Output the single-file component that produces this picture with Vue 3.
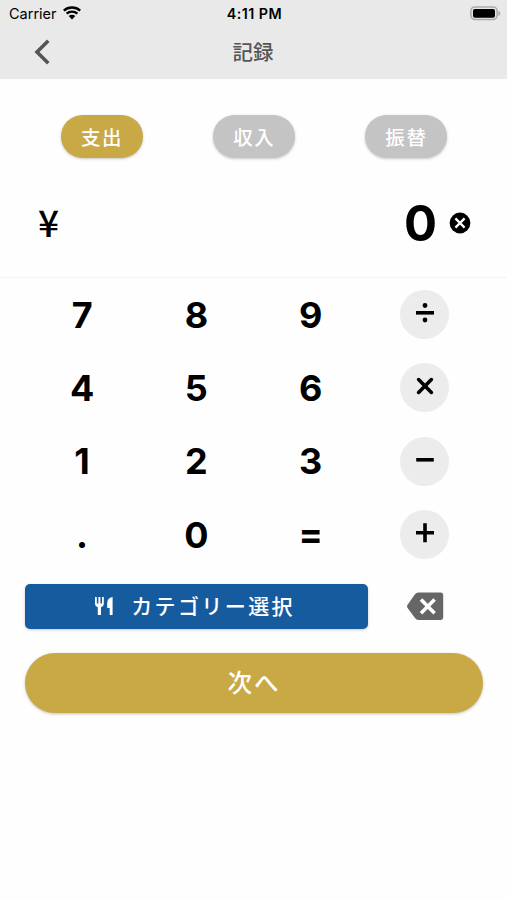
<script setup>
const tabs = [
  { label: '支出', active: true },
  { label: '収入', active: false },
  { label: '振替', active: false },
]
const keys = [
  '7', '8', '9', 'divide',
  '4', '5', '6', 'times',
  '1', '2', '3', 'minus',
  '.', '0', '=', 'plus',
]
const operators = {
  divide: 'M3 11.8H21',
  times: 'M5.6 5.6L18.4 18.4M18.4 5.6L5.6 18.4',
  minus: 'M3.2 11.8H20.8',
  plus: 'M3 11.8H21M12 2.3V21.3',
}
</script>

<template>
  <div class="screen">
    <header class="header">
      <div class="status">
        <div class="carrier">
          <span>Carrier</span>
          <svg class="wifi" width="18" height="14" viewBox="0 0 18 14">
            <path d="M.8 4.6C5.2.4 12.8.4 17.2 4.6" />
            <path d="M3.6 7.6C6.6 4.9 11.4 4.9 14.4 7.6" />
            <path class="dot" d="M5.7 10.1C7.6 8.3 10.4 8.3 12.3 10.1L9 13.5Z" />
          </svg>
        </div>
        <span class="time">4:11 PM</span>
        <svg class="battery" width="31" height="15" viewBox="0 0 31 15">
          <rect x=".9" y=".9" width="26.2" height="12.7" rx="4" />
          <rect class="charge" x="3" y="3" width="22" height="8.7" rx="1.8" />
          <path d="M28.4 4.7C30.9 5.6 30.9 9 28.4 9.9Z" />
        </svg>
      </div>
      <nav class="nav">
        <svg class="back" width="18" height="28" viewBox="0 0 18 28">
          <path d="M15.3 2.8L4 14L15.3 25.2" />
        </svg>
        <h1>記録</h1>
      </nav>
    </header>

    <div class="tabs">
      <div v-for="t in tabs" :key="t.label" class="tab-cell">
        <button class="tab" :class="{ active: t.active }"><span>{{ t.label }}</span></button>
      </div>
    </div>

    <div class="amount">
      <span class="yen">¥</span>
      <div class="value">
        <span class="number">0</span>
        <svg width="22" height="22" viewBox="0 0 22 22">
          <circle cx="11" cy="11" r="10.4" />
          <path d="M6.4 6.4L15.6 15.6M15.6 6.4L6.4 15.6" />
        </svg>
      </div>
    </div>

    <div class="keypad">
      <div v-for="k in keys" :key="k" class="key">
        <button v-if="operators[k]" class="operator">
          <svg width="24" height="24" viewBox="0 0 24 24" :class="k">
            <path :d="operators[k]" />
            <template v-if="k === 'divide'">
              <circle cx="12" cy="4.5" r="2.4" />
              <circle cx="12" cy="19" r="2.4" />
            </template>
          </svg>
        </button>
        <span v-else :class="{ equals: k === '=' }">{{ k }}</span>
      </div>
    </div>

    <div class="category-row">
      <button class="category">
        <svg width="18" height="20" viewBox="0 0 18 20">
          <path d="M0 1H1.8V7.5H3.4V1H5.4V7.5H7V1H8.8V8Q8.8 10.4 6 11.3V19H2.8V11.3Q0 10.4 0 8Z" />
          <path d="M17.6 1V19H14.7V12H12.2V7Q12.2 2 17.6 1Z" />
        </svg>
        <span>カテゴリー選択</span>
      </button>
      <div class="delete-cell">
        <svg width="38" height="29" viewBox="0 0 38 29">
          <path class="body" d="M1.4 13L8.8 2.6Q10.3.6 12.5.6H34.5Q37.2.6 37.2 3.3V25Q37.2 28 34.5 28H12.5Q10.3 28 8.8 25.8L1.4 15.7Q.6 14.3 1.4 13Z" />
          <path class="cross" d="M15 7.6L28.6 21.2M28.6 7.6L15 21.2" />
        </svg>
      </div>
    </div>

    <button class="next"><span>次へ</span></button>
  </div>
</template>

<style>
body {
  margin: 0;
  background: #fefefe;
}
</style>

<style scoped>
.screen {
  height: 900px;
  background: #fefefe;
  color: #000;
  font-family: Inter, "Noto Sans CJK JP", sans-serif;
}
button {
  display: flex;
  align-items: center;
  justify-content: center;
  box-sizing: border-box;
  padding: 0;
  border: 0;
  color: #fff;
  font-family: "Noto Sans CJK JP", sans-serif;
}
svg {
  display: block;
  flex: none;
}
.header {
  height: 79px;
  background: #e9e9e9;
}
.status {
  display: grid;
  grid-template-columns: 1fr auto 1fr;
  align-items: center;
  height: 27px;
  padding: 0 6px 0 9px;
  font-size: 14.5px;
}
.carrier {
  display: flex;
  align-items: center;
  gap: 6px;
}
.wifi {
  margin-bottom: 1px;
}
.wifi path {
  fill: none;
  stroke: #000;
  stroke-width: 2.4;
}
.wifi .dot {
  fill: #000;
  stroke: none;
}
.time {
  padding-right: 1px;
  font-size: 14.3px;
  font-weight: 600;
  letter-spacing: 0.45px;
}
.battery {
  justify-self: end;
  fill: #aaa;
}
.battery rect {
  fill: none;
  stroke: #aaa;
  stroke-width: 1.5;
}
.battery .charge {
  fill: #000;
  stroke: none;
}
.nav {
  display: grid;
  grid-template-columns: 1fr auto 1fr;
  align-items: center;
  height: 50px;
  padding: 0 34px 0 33px;
}
.back {
  fill: none;
  stroke: #555;
  stroke-width: 3.6;
}
h1 {
  margin: 0;
  padding-bottom: 2px;
  color: #555;
  font: 500 20.5px/30px "Noto Sans CJK JP", sans-serif;
}
.tabs {
  display: grid;
  grid-template-columns: repeat(3, 1fr);
  padding: 36.4px 25px 0 25.5px;
}
.tab-cell {
  display: flex;
  justify-content: center;
}
.tab {
  width: 82px;
  height: 43px;
  border-radius: 22px;
  background: #c4c4c4;
  box-shadow: 0 1px 3px rgba(0, 0, 0, 0.22);
  font-size: 19.5px;
  font-weight: 500;
  letter-spacing: 1.6px;
  text-indent: 1px;
}
.tab.active {
  background: #c9a945;
}
.amount {
  display: flex;
  align-items: center;
  justify-content: space-between;
  box-sizing: border-box;
  height: 119.6px;
  padding: 12px 36px 0 38px;
  border-bottom: 1px solid #f3f3f3;
}
.yen {
  padding-bottom: 6px;
  font: 500 37px/50px "Noto Sans CJK JP", sans-serif;
}
.value {
  display: flex;
  align-items: center;
  gap: 12px;
}
.number {
  font-size: 49px;
  font-weight: 650;
  line-height: 60px;
}
.value svg {
  margin-bottom: 1px;
}
.value path {
  fill: none;
  stroke: #fff;
  stroke-width: 2.2;
}
.keypad {
  display: grid;
  grid-template-columns: repeat(4, 1fr);
  grid-auto-rows: 73.3px;
  padding: 0 25px;
}
.key {
  display: flex;
  align-items: center;
  justify-content: center;
  font-size: 36px;
  font-weight: 700;
}
.operator {
  width: 49px;
  height: 49px;
  border-radius: 50%;
  background: #ececec;
}
.operator svg {
  margin-bottom: 3px;
}
.operator path {
  fill: none;
  stroke: #000;
  stroke-width: 3.6;
  stroke-linecap: round;
}
.operator .minus path,
.operator .plus path,
.operator .divide path {
  stroke-linecap: butt;
}
.category-row {
  display: grid;
  grid-template-columns: 3fr 1fr;
  align-items: center;
  padding: 12.8px 24.5px 0 25px;
}
.category {
  gap: 18px;
  height: 45px;
  padding-right: 3px;
  border-radius: 5px;
  background: #175b9f;
  box-shadow: 0 1px 3px rgba(0, 0, 0, 0.2);
  font-size: 21px;
  font-weight: 500;
  letter-spacing: 2.4px;
}
.category span,
.next span {
  padding-bottom: 2px;
}
.category svg {
  margin-bottom: 1px;
  fill: #fff;
}
.delete-cell {
  display: flex;
  justify-content: center;
}
.delete-cell .body {
  fill: #666;
}
.delete-cell .cross {
  fill: none;
  stroke: #fff;
  stroke-width: 3.6;
}
.equals {
  padding-bottom: 1px;
}
.next {
  width: calc(100% - 49px);
  height: 60px;
  margin: 24px 24px 0 25px;
  border-radius: 30px;
  background: #c9a945;
  box-shadow: 0 1px 3px rgba(0, 0, 0, 0.25);
  font-size: 24.5px;
  font-weight: 500;
  letter-spacing: 2px;
}
</style>
